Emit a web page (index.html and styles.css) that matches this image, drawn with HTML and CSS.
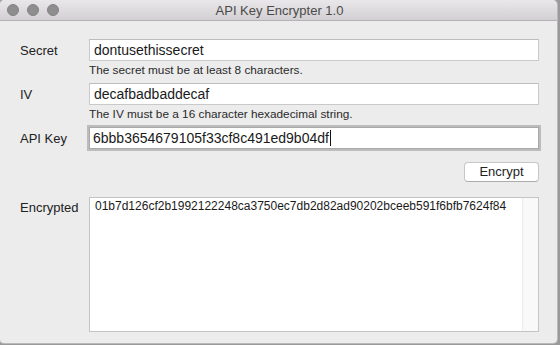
FILE: index.html
```html
<!DOCTYPE html>
<html>
<head>
<meta charset="utf-8">
<link rel="stylesheet" href="styles.css">
</head>
<body>
<div class="window">
  <div class="titlebar">
    <div class="lights">
      <span class="light"></span><span class="light"></span><span class="light"></span>
    </div>
    <div class="title">API Key Encrypter 1.0</div>
  </div>
  <div class="content">
    <div class="row row-secret">
      <div class="label">Secret</div>
      <div class="field">dontusethissecret</div>
    </div>
    <div class="help">The secret must be at least 8 characters.</div>
    <div class="row row-iv">
      <div class="label">IV</div>
      <div class="field">decafbadbaddecaf</div>
    </div>
    <div class="help">The IV must be a 16 character hexadecimal string.</div>
    <div class="row row-key">
      <div class="label">API Key</div>
      <div class="field focused">6bbb3654679105f33cf8c491ed9b04df<span class="caret"></span></div>
    </div>
    <div class="actions">
      <div class="button">Encrypt</div>
    </div>
    <div class="row row-out">
      <div class="label label-top">Encrypted</div>
      <div class="textarea">
        <div class="output">01b7d126cf2b1992122248ca3750ec7db2d82ad90202bceeb591f6bfb7624f84</div>
        <div class="scrolltrack"></div>
      </div>
    </div>
  </div>
</div>
</body>
</html>
```

FILE: styles.css
```css
html, body {
  margin: 0;
  padding: 0;
}
body {
  width: 560px;
  height: 345px;
  background: #9a9a9a;
  font-family: "Liberation Sans", Arial, sans-serif;
  overflow: hidden;
}
.window {
  width: 557px;
  height: 343px;
  background: #ececec;
  border-radius: 5px 5px 4px 4px;
  overflow: hidden;
  box-shadow: 0 0 0 1px #b9b9b9;
  display: flex;
  flex-direction: column;
}
.titlebar {
  height: 20px;
  border-bottom: 1px solid #b3b3b3;
  background: linear-gradient(#e9e7e9, #d2d0d2);
  display: flex;
  align-items: center;
  position: relative;
}
.lights {
  display: flex;
  gap: 8px;
  padding-left: 7px;
}
.light {
  width: 12px;
  height: 12px;
  border-radius: 50%;
  background: #8e8e8e;
  box-sizing: border-box;
  border: 1px solid #838383;
}
.title {
  flex: 1;
  text-align: center;
  margin-left: -52px;
  font-size: 13px;
  color: #4a4a4a;
  padding-right: 5px;
}
.content {
  padding: 18px 18px 0 20px;
  display: flex;
  flex-direction: column;
}
.row {
  display: flex;
  align-items: center;
}
.label {
  width: 69px;
  flex: none;
  font-size: 13px;
  color: #222;
}
.field {
  flex: 1;
  height: 22px;
  box-sizing: border-box;
  background: #fff;
  border: 1px solid #c9c9c9;
  border-top-color: #bdbdbd;
  font-size: 14px;
  color: #1a1a1a;
  padding-left: 4px;
  line-height: 20px;
  white-space: nowrap;
}
.field.focused {
  border-color: #a9a9a9;
  box-shadow: 0 0 0 2px #bcbcbc;
  padding-left: 3px;
}
.caret {
  display: inline-block;
  width: 1px;
  height: 16px;
  background: #111;
  vertical-align: -3px;
  margin-left: 1px;
}
.help {
  margin: 2px 0 0 69px;
  height: 14px;
  font-size: 11.8px;
  line-height: 14px;
  color: #2a2a2a;
}
.row-iv {
  margin-top: 6px;
}
.row-key {
  margin-top: 6px;
}
.actions {
  display: flex;
  justify-content: flex-end;
  margin-top: 13px;
}
.button {
  width: 75px;
  height: 20px;
  box-sizing: border-box;
  background: #fff;
  border: 1px solid #c6c6c6;
  border-bottom-color: #acacac;
  border-radius: 4px;
  font-size: 13px;
  line-height: 18px;
  text-align: center;
  color: #222;
}
.row-out {
  margin-top: 15px;
  align-items: flex-start;
}
.label-top {
  padding-top: 3px;
}
.textarea {
  flex: 1;
  height: 135px;
  box-sizing: border-box;
  background: #fff;
  border: 1px solid #c4c4c4;
  display: flex;
}
.output {
  flex: 1;
  font-size: 12px;
  line-height: 15px;
  color: #1a1a1a;
  padding: 1px 0 0 5px;
  white-space: nowrap;
}
.scrolltrack {
  width: 15px;
  flex: none;
  background: #f9f9f9;
  border-left: 1px solid #ececec;
}
```
